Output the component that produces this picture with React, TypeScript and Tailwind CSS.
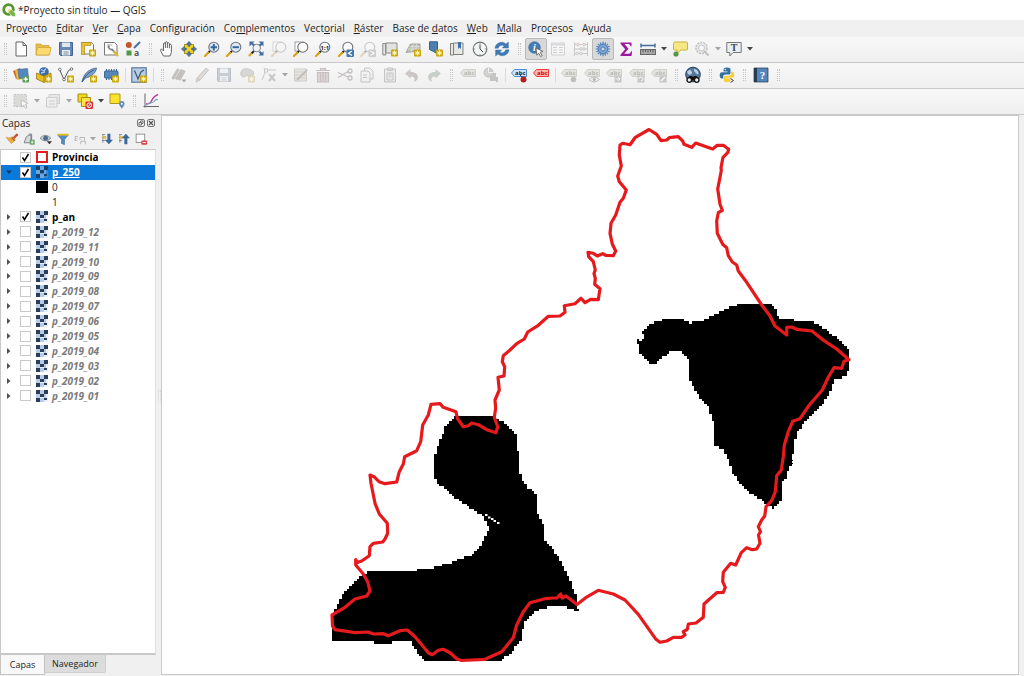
import { useState } from "react";
import type { ReactNode } from "react";

/* ---------- Icon building blocks (16 x 16 grid) ---------- */

function Icon({ children, faded = false }: { children: ReactNode; faded?: boolean }) {
  return (
    <svg
      viewBox="0 0 16 16"
      aria-hidden="true"
      className={faded ? "size-4 overflow-visible opacity-35 grayscale-[50%]" : "size-4 overflow-visible"}
    >
      {children}
    </svg>
  );
}

function NewBadge() {
  return (
    <g>
      <rect x="9" y="8.5" width="7" height="7" rx="1" fill="#c9a50a" />
      <path d="M12.5 9.5v5M10.3 10.8l4.4 2.5M14.7 10.8l-4.4 2.5" stroke="#fff6b8" strokeWidth="1.2" />
    </g>
  );
}

function Lens({ children, blank = false }: { children?: ReactNode; blank?: boolean }) {
  return (
    <g>
      <path d="M6 10 3.6 12.4" stroke="#222" strokeWidth="2" />
      <path d="M4.2 11.8 1 15" stroke="#d9a514" strokeWidth="2.2" strokeLinecap="round" />
      <circle cx="9.8" cy="6.2" r="5" fill={blank ? "#fafafa" : "#dfe9f5"} stroke="#6d737b" strokeWidth="1.1" />
      {children}
    </g>
  );
}

function Tag({ tone = "#8f9178", fill = "#c3c5aa", text = "#44472f" }: { tone?: string; fill?: string; text?: string }) {
  return (
    <g>
      <path d="M.5 6 3.500 2.500h12v7h-12z" fill={fill} stroke={tone} strokeLinejoin="round" />
      <text x="9.3" y="8" fontSize="6" fontWeight="700" textAnchor="middle" fill={text} fontFamily="Open Sans, sans-serif">
        abc
      </text>
    </g>
  );
}

const Cursor = () => <path d="M8 7l7 3.4-2.8.9 2 3.2-1.6 1-2-3.3-1.8 2z" fill="#fff" stroke="#555" strokeWidth=".8" />;

const icons: Record<string, ReactNode> = {
  newProject: <path d="M3 1h7l3.5 3.5V15H3zM10 1v3.5h3.5" fill="#fff" stroke="#666" />,
  open: (
    <g stroke="#d0a63a" strokeWidth=".8">
      <path d="M1 3h5l1 1.500h7V14H1z" fill="#e6bd4b" />
      <path d="M2.500 6.500H16L14.500 14H1z" fill="#fbdb70" />
    </g>
  ),
  save: (
    <g>
      <path d="M1.500 1.500h13v13h-12l-1-1z" fill="#6589b3" stroke="#41658f" />
      <path d="M4 1.500h8v4.500H4z" fill="#dfe6ee" />
      <path d="M4 9h8v5.500H4z" fill="#e9edf2" />
      <path d="M5.500 11h5M5.500 13h5" stroke="#7b8ea5" />
    </g>
  ),
  layout: (
    <g>
      <path d="M1.500 1.500h10l2 2V13h-9z" fill="#fff" stroke="#777" />
      <path d="M1.500 1.500H11v3H4.500v9h-3z" fill="#ebc234" stroke="#b08e1c" strokeWidth=".7" />
      <NewBadge />
    </g>
  ),
  layouts: (
    <g>
      <path d="M1.500 1.500h10l2.500 2.500v10H1.500z" fill="#fff" stroke="#777" />
      <path d="M4 4h5M4 6h2" fill="none" stroke="#aaa" />
      <path d="M6 4.500a2.800 2.800 0 0 0 3 4l5.500 5.500" stroke="#7d868f" strokeWidth="1.800" fill="none" />
      <path d="M10.500 10.500 15 15" stroke="#e0bd2d" strokeWidth="2.400" />
    </g>
  ),
  style: (
    <g>
      <circle cx="3.800" cy="4" r="3" fill="#c4542b" />
      <path d="M9 7 15 1" stroke="#4c74a8" strokeWidth="2.200" />
      <rect x="1.500" y="9.500" width="5" height="5" fill="#4f9a4a" />
      <text x="9" y="14.500" fontSize="8.500" fontWeight="700" fill="#555" fontFamily="Open Sans, sans-serif">
        a
      </text>
    </g>
  ),
  pan: (
    <path
      d="M4.500 15 2 10.500C1 8.500 2 7.500 3.300 8.500L4.500 10V3c0-1.400 1.900-1.400 1.900 0V1.700c0-1.400 2-1.400 2 0v1c0-1.300 2-1.300 2 0v1.500c0-1.200 2-1.200 2 0V10c0 2.500-1 3.500-1.400 5zM6.400 3v4M8.400 2.700V7M10.400 4v3.200"
      fill="#fff"
      stroke="#555"
      strokeWidth=".9"
    />
  ),
  panSel: (
    <g>
      <rect x="3.500" y="3.500" width="9" height="9" fill="#f2d321" stroke="#b39a1b" />
      <path
        d="M8 .3 10.600 3.300H9v2H7v-2H5.400zM8 15.700 5.400 12.700H7v-2h2v2h1.600zM.3 8l3-2.600V7h2v2h-2v1.600zM15.700 8l-3 2.600V9h-2V7h2V5.400z"
        fill="#53779f"
        stroke="#35577f"
        strokeWidth=".5"
      />
    </g>
  ),
  zoomIn: (
    <Lens>
      <path d="M9.800 3v6.400M6.600 6.200H13" stroke="#34679e" strokeWidth="2" />
    </Lens>
  ),
  zoomOut: (
    <Lens>
      <path d="M6.600 6.200H13" stroke="#34679e" strokeWidth="2" />
    </Lens>
  ),
  zoomFull: (
    <g>
      <path d="M3.500 12.500 6 10" stroke="#222" strokeWidth="2" />
      <path d="M3.500 12.300 1 15" stroke="#d9a514" strokeWidth="2.200" />
      <circle cx="8.700" cy="7" r="3.800" fill="#eef3f8" stroke="#7b838c" />
      <path
        d="M1.500.5h5L5 2l1.800 1.800-1.500 1.500L3.500 3.500 1.500 5.500zM15.500.5v5L14 4l-1.800 1.500-1.500-1.500L12.500 2.200 10.500.5zM15.500 14.500h-5l1.700-1.500-1.500-1.500 1.500-1.500L14 11.700l1.500-1.700z"
        fill="#426f9f"
      />
    </g>
  ),
  zoomLayer: (
    <g>
      <rect x="2" y="1" width="9" height="9" fill="#fff" stroke="#888" strokeWidth=".8" />
      <Lens blank />
    </g>
  ),
  zoomNative: (
    <Lens blank>
      <text x="9.800" y="8.500" fontSize="6" fontWeight="700" textAnchor="middle" fill="#222" fontFamily="Open Sans, sans-serif">
        1:1
      </text>
    </Lens>
  ),
  zoomLast: (
    <g>
      <Lens blank />
      <rect x="8.500" y="8.500" width="7.500" height="7.500" rx="1" fill="#4478ad" />
      <path d="m14 10-3.500 2.200L14 14.500" stroke="#fff" strokeWidth="1.300" fill="none" />
    </g>
  ),
  zoomNext: (
    <g>
      <Lens blank />
      <rect x="8.500" y="8.500" width="7.500" height="7.500" rx="1" fill="#888" />
      <path d="m10.500 10 3.500 2.200-3.500 2.300" stroke="#fff" strokeWidth="1.300" fill="none" />
    </g>
  ),
  newMap: (
    <g>
      <path d="M.8 2.500h3V14h-3zM3.800 2H15v10H3.800z" fill="#e2e3e0" stroke="#8b8d88" />
      <NewBadge />
    </g>
  ),
  new3d: (
    <g>
      <path d="M5.500 3H15v7L1 11.500z" fill="#bfc1bb" stroke="#94968f" strokeWidth=".8" />
      <path d="M4.500 5.500H15M3 8h12M8.500 3 6 11M11.800 3 10.500 10" stroke="#e9e9e6" strokeWidth=".6" />
      <NewBadge />
    </g>
  ),
  bookmarkNew: (
    <g>
      <path d="M2.500.8h8V13L6.500 10.500 2.500 8.500z" fill="#4e7eb0" stroke="#31618f" />
      <NewBadge />
    </g>
  ),
  bookmarks: (
    <g>
      <path d="M1.500 2.500h3V14h-3zM4.500 2H14v11.500H4.500z" fill="#e6e7e5" stroke="#7f817c" />
      <path d="M9 1h3v7l-1.500-1.500L9 8z" fill="#3f70a6" />
    </g>
  ),
  clock: (
    <g>
      <circle cx="8" cy="8" r="6.800" fill="#f4f6f6" stroke="#777c7f" strokeWidth="1.200" />
      <path d="M8 3.500V8l3 3" stroke="#444" fill="none" />
      <path d="M8 1.500v1.300M8 13.200v1.300M1.500 8h1.300M13.200 8h1.300" stroke="#777" />
    </g>
  ),
  refresh: (
    <g fill="#3f7db8" stroke="#2d6299" strokeWidth=".4">
      <path d="M1 7.200C1.300 2 8-.8 12 3l2.400-2V7H8.300l1.900-2C8 3.300 5.300 4.200 4.300 7.200z" />
      <path d="M15 8.800C14.700 14 8 16.800 4 13l-2.400 2V9h6.100l-1.900 2c2.200 1.700 4.900.8 5.900-2.200z" />
    </g>
  ),
  identify: (
    <g>
      <circle cx="6.500" cy="6.500" r="5.800" fill="#447cb3" stroke="#316294" strokeWidth=".6" />
      <text x="6.400" y="10" fontSize="10" fontStyle="italic" fontWeight="700" textAnchor="middle" fill="#fff" fontFamily="Liberation Serif, serif">
        i
      </text>
      <Cursor />
    </g>
  ),
  table: (
    <g>
      <path d="M1.500 2h13v12h-13z" fill="#fff" stroke="#999" />
      <path d="M1.500 3.500h13" stroke="#8aa4bf" strokeWidth="2" />
      <path d="M3 6.500h4M9 6.500h4M3 9h4M9 9h4M3 11.500h4M9 11.500h4" stroke="#888" />
    </g>
  ),
  abacus: (
    <g stroke="#777" fill="none">
      <path d="M1.500 1v14M14.500 1v14M1.500 3.500h13M1.500 8h13M1.500 12.500h13" />
      <g fill="#eee">
        <circle cx="5" cy="3.500" r="1.300" stroke="#b55" />
        <circle cx="11" cy="3.500" r="1.300" stroke="#b55" />
        <circle cx="8" cy="8" r="1.300" />
        <circle cx="11" cy="8" r="1.300" />
        <circle cx="4.500" cy="12.500" r="1.300" />
        <circle cx="8" cy="12.500" r="1.300" />
      </g>
    </g>
  ),
  gear: (
    <g stroke="#4d7fb8">
      <path
        d="M8 .8v14.400M.8 8h14.400M2.900 2.900l10.200 10.200M13.100 2.900 2.900 13.100M5.300 1.400l5.400 13.200M10.700 1.400 5.300 14.600M1.400 5.300l13.200 5.400M14.600 5.300 1.400 10.700"
        strokeWidth="1.200"
      />
      <circle cx="8" cy="8" r="4.800" fill="#7ba5d3" />
      <circle cx="8" cy="8" r="2" fill="#dadada" />
    </g>
  ),
  sigma: (
    <path
      d="M2.500 1.500h11v3.800h-1C12 3.600 11.300 3 10 3H6.500l4 4.700-4.300 5H10.500c1.400 0 2.200-.8 2.600-2.500h1L13.500 15h-11v-1.200l4.700-5.500-4.700-5.500z"
      fill="#9b1a9b"
    />
  ),
  measure: (
    <g>
      <path d="M.5 4.500h15M1 2.500v4M15 2.500v4" stroke="#436b98" strokeWidth="1.400" />
      <rect x=".5" y="8.500" width="15" height="5" fill="#aaa" stroke="#666" />
      <path d="M3 9v2.500M5.500 9v2M8 9v2.500M10.500 9v2M13 9v2.500" stroke="#444" strokeWidth=".7" />
    </g>
  ),
  tip: (
    <g>
      <path d="M3 1h11.500q1 0 1 1v6q0 1-1 1H9l-4 3.500V9H2.500q-1 0-1-1V2.500Q1.500 1 3 1z" fill="#f6e785" stroke="#c9b33c" />
      <circle cx="4" cy="13" r="2.600" fill="#569347" />
    </g>
  ),
  search: (
    <g stroke="#666" fill="none">
      <circle cx="7.500" cy="7" r="5.500" fill="#ddd" strokeDasharray="2 1" strokeWidth="1.600" />
      <circle cx="7.500" cy="7" r="3" fill="#fff" />
      <path d="m10 10 4.500 4.500" strokeWidth="2" />
    </g>
  ),
  text: (
    <g>
      <path d="M.8 1.500h14.400v10H7L3.800 15v-3.500h-3z" fill="#e8f0f5" stroke="#777" />
      <text x="8" y="10" fontSize="10" fontWeight="700" textAnchor="middle" fill="#444" fontFamily="Liberation Serif, serif">
        T
      </text>
    </g>
  ),
  dataSources: (
    <g>
      <path d="m0 4 7-3 3 9-7 2z" fill="#d56529" />
      <path d="m2 3 7-1 2 10-7 1z" fill="#e7bb3f" />
      <path d="M5 2.500 14.500 1.500 15.500 10.500l-9.500 1z" fill="#5387bf" stroke="#3c6ba0" strokeWidth=".6" />
      <rect x="9.500" y="9" width="6.500" height="6.500" rx="1" fill="#5c9a5a" />
      <path d="M12.700 10v4.500M10.500 12.200H15" stroke="#fff" strokeWidth="1.300" />
    </g>
  ),
  geopackage: (
    <g>
      <circle cx="8" cy="5" r="4.800" fill="#3a6ea5" />
      <path d="M5 2.500 8 4l2-2.500M5 6l4-1" stroke="#a9c7e3" strokeWidth="1.300" fill="none" />
      <path d="m.5 6 7.500 3 7-3v5l-7 4.500L.5 12z" fill="#e8bd22" stroke="#8c6f10" strokeWidth=".7" />
      <path d="M8 9v6.500" stroke="#8c6f10" strokeWidth=".7" />
      <NewBadge />
    </g>
  ),
  shapefile: (
    <g>
      <path d="M1.500 2.500 6 12.500l4.500-9L14 2" fill="none" stroke="#555" />
      <g fill="#fff" stroke="#555" strokeWidth=".8">
        <circle cx="1.800" cy="2.500" r="1.300" />
        <circle cx="6" cy="12.500" r="1.300" />
        <circle cx="13.500" cy="2" r="1.300" />
      </g>
      <NewBadge />
    </g>
  ),
  spatialite: (
    <g>
      <path d="M1 15C2 8 7 2 15.500 1 15 6 10 10 4.500 11z" fill="#7ba1cb" stroke="#3d6491" strokeWidth=".8" />
      <path d="M1 15C4 9 8 5 13 3" fill="none" stroke="#34577f" />
      <NewBadge />
    </g>
  ),
  memory: (
    <g>
      <path d="M3.500 2v11M6 2v11M8.500 2v11M11 2v11M13.500 2v11" stroke="#345f8f" />
      <rect x="1.500" y="4" width="13.500" height="7" rx="1" fill="#5586bb" stroke="#3a6797" />
      <NewBadge />
    </g>
  ),
  virtual: (
    <g>
      <rect x=".8" y=".8" width="14.400" height="14.400" fill="#b9cee4" stroke="#55789d" strokeWidth="1.200" />
      <path d="M3.500 3.500 7 12l3-7 3-2" fill="none" stroke="#35577b" strokeWidth="1.200" />
      <NewBadge />
    </g>
  ),
  edits: (
    <g stroke="#75614e" strokeWidth="2.800">
      <path d="m1.500 12 6-10M5 12.500l6-10M8 13l5.500-9.500" />
      <path d="M10.500 12.500h5l-2.500 3z" fill="#222" stroke="none" />
    </g>
  ),
  pencil: <path d="m2 15 1-4L12 1l2.500 2L6 13zM3 11l3 2" fill="#c6a98c" stroke="#806d5a" />,
  addFeature: (
    <g>
      <path d="M2 8C1 3 5 1 9 2s6 2 5.500 5S8 8 7 9s-4 2-5-1z" fill="#9fa59a" stroke="#6d7468" />
      <NewBadge />
    </g>
  ),
  vertex: (
    <g stroke="#777" fill="none">
      <path d="M1 13 5 3h10M5 3l-2.500-2" />
      <rect x="3.500" y="2" width="3" height="3" fill="#fff" />
      <path d="m8 7 6 7M14 7l-6 7" strokeWidth="2" />
    </g>
  ),
  modify: (
    <g>
      <path d="M1.500 2h12v12h-12zM1.500 5h12M1.500 8h12M1.500 11h12" fill="#d3ceb4" stroke="#8a8874" />
      <path d="m4 13 10-10" stroke="#6e5a44" strokeWidth="2" />
    </g>
  ),
  trash: (
    <path
      d="M1 3.500h14M5.500 3V1.500h5V3M2.500 5.500h11V15h-11zM5.500 6v8M8 6v8M10.500 6v8"
      fill="#c4a1a1"
      stroke="#8a5d5d"
      strokeWidth="1.200"
    />
  ),
  cut: (
    <g fill="none" stroke="#70605c" strokeWidth="1.300">
      <path d="M1 5.500 11 10M1 10.500 12 4" />
      <circle cx="13" cy="4" r="2" />
      <circle cx="13" cy="11" r="2" />
    </g>
  ),
  copy: <path d="M2 4h7l2 2v9H2zM5.500 4V1H11l3 3v8h-3M4 8h4M4 10.500h4" fill="#eee" stroke="#6f6f6f" />,
  paste: <path d="M2.500 2h11v13h-11zM5.500 1h5v2.500h-5zM5 6h6v7H5zM6.500 8h3M6.500 10h3" fill="#ddd" stroke="#6d6d6d" />,
  undo: <path d="M1 6.500 6.500 2v3C12 5 14 7.500 14 10.500c0 2-2 3.500-4.500 4.500 2-2.500 1.500-5.500-3-5.500v2z" fill="#8f6d6d" />,
  redo: <path d="M15 6.500 9.500 2v3C4 5 2 7.500 2 10.500c0 2 2 3.500 4.500 4.500-2-2.500-1.500-5.500 3-5.500v2z" fill="#6d8f6d" />,
  tag: <Tag />,
  diagram: (
    <g>
      <circle cx="5.500" cy="5.500" r="4.500" fill="#7fa07f" stroke="#555" />
      <path d="M5.500 1v4.500H10" stroke="#eee" fill="#a66" />
      <path d="M7 8h3v6H7zM10 6h3v8h-3zM13 10h2v5h-2z" fill="#7b6c6c" />
    </g>
  ),
  labelBlue: (
    <g>
      <Tag tone="#4d8fd6" fill="#cfe4fa" text="#222" />
      <path d="m8 7 5 5" stroke="#444" />
      <circle cx="12.500" cy="12.500" r="3" fill="#b32020" />
    </g>
  ),
  labelRed: <Tag tone="#f03a3a" fill="#ffb3b3" text="#d80000" />,
  tagPin: (
    <g>
      <Tag />
      <circle cx="12.500" cy="12.500" r="2.800" fill="#7a5555" />
    </g>
  ),
  tagEye: (
    <g>
      <Tag />
      <path d="M5 12.500q5-5 10.500 0-5.500 5-10.500 0z" fill="#eee" stroke="#555" />
      <circle cx="10.300" cy="12.500" r="1.500" fill="#444" />
    </g>
  ),
  tagMove: (
    <g>
      <Tag />
      <rect x="8.500" y="8.500" width="7" height="7" fill="#777" />
      <path d="M9.500 12H14M12 10l2 2-2 2" stroke="#fff" fill="none" />
    </g>
  ),
  tagRotate: (
    <g>
      <Tag />
      <rect x="8.500" y="8.500" width="7" height="7" fill="#777" />
      <path d="M10 12a2 2 0 1 1 2 2" stroke="#fff" fill="none" />
    </g>
  ),
  tagEdit: (
    <g>
      <Tag />
      <rect x="8.500" y="8.500" width="7" height="7" fill="#777" />
      <path d="m10 14 4-4" stroke="#fff" strokeWidth="1.500" />
    </g>
  ),
  metasearch: (
    <g>
      <circle cx="8" cy="7.500" r="7.300" fill="#55779b" stroke="#263c54" />
      <path d="M2 5c3-4 5-1 5 1s-3 2-4 1M9 2c3 0 5 3 4.500 5S10 5 9 4" fill="#b9d0e5" />
      <path d="M4.500 9h2.300l1.200 1 1.200-1h2.300l3 4.500H1.500z" fill="#111" />
      <circle cx="4.300" cy="13" r="2.300" fill="#eee" stroke="#111" strokeWidth="1.300" />
      <circle cx="11.700" cy="13" r="2.300" fill="#eee" stroke="#111" strokeWidth="1.300" />
    </g>
  ),
  python: (
    <g>
      <path
        d="M8 .5c-3 0-3.500 1-3.500 2.300V4.500H8.500v.7H3C1.200 5.200.7 6.800.7 8.500s.8 3 2 3h1.500V9.700c0-1.300 1-2.200 2.300-2.200h3.300c1 0 1.700-.8 1.700-1.800V2.800C11.500 1.300 10.500.5 8 .5z"
        fill="#34709f"
      />
      <path
        d="M8 15.300c3 0 3.500-1 3.500-2.300v-1.500h-4v-.7H13c1.800 0 2.200-1.300 2.200-3s-.7-3-2-3H12v1.700c0 1.300-1 2.300-2.300 2.300H6.400c-1 0-1.700.8-1.700 1.800V13c0 1.500 1 2.300 3.300 2.300z"
        fill="#fbcf3c"
      />
      <circle cx="6.300" cy="2.500" r=".7" fill="#fff" />
      <path d="m11.500 11.500 3 2-3 2" stroke="#444" fill="none" />
    </g>
  ),
  help: (
    <g>
      <path d="M1 1h14v14H1z" fill="#5285ba" stroke="#23364a" strokeWidth=".7" />
      <path d="M1 1h3v14H1z" fill="#263a50" />
      <text x="9.500" y="12" fontSize="11" fontWeight="700" textAnchor="middle" fill="#fff" fontFamily="Liberation Serif, serif">
        ?
      </text>
    </g>
  ),
  select: (
    <g>
      <rect x="1" y="1.500" width="12.500" height="12" fill="#a9ae98" stroke="#666" strokeDasharray="2 1.300" />
      <Cursor />
    </g>
  ),
  selectForm: (
    <g>
      <path d="M4 1.500h10.500v9H4z" fill="#ccc" stroke="#888" />
      <path d="M1.500 4.500H12V14H1.500z" fill="#e5e5e0" stroke="#888" />
      <path d="M4 8h6M4 11h6" stroke="#888" />
    </g>
  ),
  deselect: (
    <g>
      <path d="M1 1h9v8H1z" fill="#f4d91e" stroke="#a48e16" />
      <path d="M4.500 4.500h9v9h-9z" fill="#fbe546" stroke="#a48e16" />
      <rect x="8.500" y="8.500" width="7.500" height="7.500" rx="1" fill="#d22f2f" />
      <circle cx="12.200" cy="12.200" r="2.300" stroke="#fff" fill="none" />
      <path d="m10.700 13.800 3-3" stroke="#fff" />
    </g>
  ),
  selectLocation: (
    <g>
      <path d="M1 1h10v9.500H1z" fill="#fbe22b" stroke="#ac981d" />
      <path d="M12.800 15.800c-1.500-2.500-2.700-3.300-2.700-5a2.700 2.700 0 0 1 5.400 0c0 1.700-1.200 2.500-2.700 5z" fill="#628cb5" />
      <circle cx="12.800" cy="10.800" r="1" fill="#fff" />
    </g>
  ),
  profile: (
    <g fill="none">
      <path d="M2 .5v14M.5 13.500H16" stroke="#666" />
      <path d="M3 11c5 0 5-2 6.500-5S13 2.500 15 1.500" stroke="#c32f93" strokeWidth="1.400" />
      <path d="M3 12c4-4 6-1 8-3.500s3-2 4-2" stroke="#76a6bd" strokeWidth="1.200" />
    </g>
  ),
  brush: (
    <g>
      <path d="m9.500 7.500 6-6" stroke="#c94f38" strokeWidth="3" />
      <path d="M0 5.500 7 14l5.500-4.500-4-4.500C6 7 3 7 0 5.500z" fill="#ecaf3c" stroke="#c98a2e" strokeWidth=".8" />
      <path d="M7.500 6 11.500 10.500" stroke="#b05a33" strokeWidth="1.600" />
    </g>
  ),
  addGroup: (
    <g fill="none" stroke="#667">
      <path d="M4.500 5 1.500 13h9V3h-3zM7.500 1.500h4v10" fill="#d7dade" />
      <rect x="9" y="9" width="6.500" height="6.500" fill="#5ca05a" stroke="none" />
      <path d="M12.200 10v4.500M10 12.200h4.500" stroke="#fff" />
    </g>
  ),
  eye: (
    <g>
      <path d="M0 7q7-8 14.500 0-7.500 7-14.500 0z" fill="#c9d3dd" stroke="#6a7681" />
      <circle cx="7.500" cy="7" r="3.300" fill="#4e6c8b" />
      <path d="M9 11h7l-3.500 4z" fill="#333" />
    </g>
  ),
  filter: (
    <g>
      <path d="M1 3h14l-5 5.500V15.500l-4-1.500V8.500z" fill="#568bc0" stroke="#42719f" strokeWidth=".8" />
      <path d="M.5 1h15v2.500H.5z" fill="#e2bb28" />
    </g>
  ),
  epsilon: (
    <g>
      <text x="0" y="10" fontSize="14" fill="#333" fontFamily="Liberation Serif, serif">
        ε
      </text>
      <path d="M8 9V6h6v4M9 15v-4h6v4" fill="none" stroke="#555" strokeWidth="1.200" />
    </g>
  ),
  expand: (
    <g>
      <path d="M1.500 2h4M1.500 6h4M1.500 10h4M2.500 2v11" stroke="#777" />
      <path d="M2 4h5v3.500H2z" fill="#e1bc4c" />
      <path d="M8.500 1h4v8H16l-5.500 6L5 9h3.500z" fill="#39689d" />
    </g>
  ),
  collapse: (
    <g>
      <path d="M1.500 2h4M1.500 6h4M1.500 10h4M2.500 2v11" stroke="#777" />
      <path d="M2 4h5v3.500H2z" fill="#e1bc4c" />
      <path d="M8.500 15h4V7H16l-5.500-6L5 7h3.500z" fill="#39689d" />
    </g>
  ),
  remove: (
    <g>
      <rect x="1.500" y="1.500" width="11.500" height="11" fill="#fff" stroke="#777" />
      <rect x="8.500" y="10" width="7.500" height="5.500" rx="1" fill="#dd3f3f" />
      <path d="M10 12.700h4.500" stroke="#fff" strokeWidth="1.400" />
    </g>
  ),
};

/* ---------- Toolbar parts ---------- */

type Tool = { icon: string; label: string; off?: boolean; on?: boolean };

const t = (icon: string, label: string): Tool => ({ icon, label });
const off = (icon: string, label: string): Tool => ({ icon, label, off: true });
const on = (icon: string, label: string): Tool => ({ icon, label, on: true });

function ToolButton({ tool }: { tool: Tool }) {
  return (
    <button
      type="button"
      aria-label={tool.label}
      aria-pressed={tool.on}
      disabled={tool.off}
      className={
        tool.on
          ? "flex size-[22px] shrink-0 items-center justify-center rounded-xs border border-[#b9b9b9] bg-[#d8d8d8]"
          : "flex size-[22px] shrink-0 items-center justify-center"
      }
    >
      <Icon faded={tool.off}>{icons[tool.icon]}</Icon>
    </button>
  );
}

function Tools({ items, width }: { items: Tool[]; width: string }) {
  return (
    <div className={`flex shrink-0 justify-between ${width}`}>
      {items.map((tool) => (
        <ToolButton key={tool.label} tool={tool} />
      ))}
    </div>
  );
}

function Handle({ first = false }: { first?: boolean }) {
  return (
    <div className={first ? "flex w-2.5 shrink-0 justify-center" : "flex w-3 shrink-0 justify-center"}>
      <div className="h-3 w-[3px] border-x border-dotted border-[#c6c6c6]" />
    </div>
  );
}

function Rule() {
  return (
    <div className="flex w-1.5 shrink-0 justify-center">
      <div className="h-3.5 w-px bg-[#d9d9d9]" />
    </div>
  );
}

function Drop({ label, faded = false }: { label: string; faded?: boolean }) {
  return (
    <button type="button" aria-label={label} className="flex h-4 w-2.5 shrink-0 items-center justify-center">
      <svg viewBox="0 0 6 4" aria-hidden="true" className={faded ? "h-1 w-1.5 text-[#a5a5a5]" : "h-1 w-1.5 text-[#444]"}>
        <path d="M0 0h6L3 3.500z" fill="currentColor" />
      </svg>
    </button>
  );
}

function Toolbar({ children, label }: { children: ReactNode; label: string }) {
  return (
    <div
      role="toolbar"
      aria-label={label}
      className="flex h-[26px] shrink-0 items-center overflow-hidden border-b border-[#c9c9c9] bg-linear-to-b from-[#f8f8f8] to-[#efefef] pb-px"
    >
      {children}
    </div>
  );
}

/* ---------- Menu bar: [text before, mnemonic, text after] ---------- */

const menus: [string, string, string][] = [
  ["Pro", "y", "ecto"],
  ["", "E", "ditar"],
  ["", "V", "er"],
  ["", "C", "apa"],
  ["Confi", "g", "uración"],
  ["Co", "m", "plementos"],
  ["Vect", "o", "rial"],
  ["", "R", "áster"],
  ["Base de ", "d", "atos"],
  ["", "W", "eb"],
  ["", "M", "alla"],
  ["Pro", "c", "esos"],
  ["A", "y", "uda"],
];

/* ---------- Layer tree ---------- */

type LayerRow = {
  name: string;
  kind: "vector" | "raster" | "legend-black" | "legend-empty";
  checked?: boolean;
  selected?: boolean;
  dim?: boolean;
};

const layers: LayerRow[] = [
  { name: "Provincia", kind: "vector", checked: true },
  { name: "p_250", kind: "raster", checked: true, selected: true },
  { name: "0", kind: "legend-black" },
  { name: "1", kind: "legend-empty" },
  { name: "p_an", kind: "raster", checked: true },
  ...["12", "11", "10", "09", "08", "07", "06", "05", "04", "03", "02", "01"].map(
    (month): LayerRow => ({ name: `p_2019_${month}`, kind: "raster", dim: true }),
  ),
];

function RasterIcon({ selected = false }: { selected?: boolean }) {
  const dark = selected ? "#16426f" : "#2c3d56";
  const light = selected ? "#6ba6dd" : "#b5cdeb";
  return (
    <svg viewBox="0 0 12 12" aria-hidden="true" className="size-3" shapeRendering="crispEdges">
      <path d="M0 0h12v12H0z" fill={selected ? "#3b86cd" : "#e9f0f9"} />
      <path d="M0 4h4v4H0zM4 0h4v4H4zM8 4h2v4H8zM4 8h4v4H4z" fill={light} />
      <path d="M0 0h4v4H0zM8 0h4v4H8zM4 4h4v3H4zM0 8h4v4H0zM8 8h3v2H8z" fill={dark} />
    </svg>
  );
}

function LayerItem({ row }: { row: LayerRow }) {
  const [checked, setChecked] = useState(Boolean(row.checked));
  const isLegend = row.kind.startsWith("legend");
  const id = `layer-${row.name}`;
  const textStyle = row.selected
    ? "font-bold text-white underline"
    : row.dim
      ? "font-['Noto_Sans',sans-serif] font-bold italic text-[#7a7a7a]"
      : isLegend
        ? "text-[#222]"
        : "font-bold text-black";
  return (
    <li
      className={
        row.selected
          ? "grid grid-cols-[19px_16px_16px_1fr] items-center bg-[#0b79d8]"
          : "grid grid-cols-[19px_16px_16px_1fr] items-center"
      }
    >
      {row.kind === "raster" ? (
        <button type="button" aria-label={`Desplegar ${row.name}`} className="flex h-3 w-4 items-center justify-center">
          <svg viewBox="0 0 6 6" aria-hidden="true" className="size-1.5">
            {row.selected ? <path d="M0 1.500h6L3 5z" fill="#0b3b6b" /> : <path d="M1 0v6l3.500-3z" fill="#505050" />}
          </svg>
        </button>
      ) : (
        <span />
      )}
      {isLegend ? (
        <span />
      ) : (
        <span className="grid size-[11px]">
          <input
            id={id}
            type="checkbox"
            checked={checked}
            onChange={() => setChecked(!checked)}
            className="col-start-1 row-start-1 size-[11px] appearance-none border border-[#c9c9c9] bg-white"
          />
          {checked && (
            <svg viewBox="0 0 11 11" aria-hidden="true" className="pointer-events-none col-start-1 row-start-1 size-[11px]">
              <path d="m2.500 5.500 2 3L8.500 2" fill="none" stroke="#000" strokeWidth="1.500" />
            </svg>
          )}
        </span>
      )}
      {row.kind === "vector" && <span className="size-3 border-2 border-[#e02020] bg-white" />}
      {row.kind === "raster" && <RasterIcon selected={row.selected} />}
      {row.kind === "legend-black" && <span className="size-3 bg-black" />}
      {row.kind === "legend-empty" && <span />}
      <label htmlFor={isLegend ? undefined : id} className={`text-[10px] leading-[14px] whitespace-nowrap ${textStyle}`}>
        {row.name}
      </label>
    </li>
  );
}

/* ---------- Map ---------- */

type Point = [number, number];

const parse = (source: string): Point[] =>
  source
    .trim()
    .split(/\s+/)
    .map((pair) => pair.split(",").map(Number) as Point);

const CELL = 2.5;
const ORIGIN_X = 331.5;
const ORIGIN_Y = 303.5;

const snap = (value: number, origin: number) => origin + Math.round((value - origin) / CELL) * CELL;

/** Fills a polygon with square raster cells, one horizontal run at a time. */
function rasterPath(points: Point[]): string {
  const ys = points.map((p) => p[1]);
  let path = "";
  for (let y = snap(Math.min(...ys), ORIGIN_Y); y < Math.max(...ys); y += CELL) {
    const middle = y + CELL / 2;
    const hits: number[] = [];
    points.forEach(([x1, y1], i) => {
      const [x2, y2] = points[(i + 1) % points.length];
      if (y1 > middle !== y2 > middle) hits.push(x1 + ((middle - y1) * (x2 - x1)) / (y2 - y1));
    });
    hits.sort((a, b) => a - b);
    for (let i = 0; i + 1 < hits.length; i += 2) {
      const from = snap(hits[i], ORIGIN_X);
      const to = snap(hits[i + 1], ORIGIN_X);
      path += `M${from} ${y}H${to}V${y + CELL}H${from}z`;
    }
  }
  return path;
}

const eastZone = parse(`
  636,338 638.500,338 640,341 643,339 642.700,331.700 650,324.300 660,320 670,318.300 681.700,318.700 690,322.300 700,322 711.700,315.700
  723.300,310 735,305.300 744,303.300 770,303.700 775.300,308.300 776,316 781.700,319 789,319.300 791,317 794,320 813.300,321.700
  821.700,326.700 833.300,335.700 841.700,341 849,350 849,370 845,375.700 833.300,380 831.700,390 823.300,401.700 810,415 798.300,430.700
  793.300,441.700 792.300,464 788.300,466.700 786.700,476.700 782.700,480 782.300,499.300 776.700,503.300 774,508.300 768.300,505
  760,499.300 748.300,491.700 740,483.300 731.700,471.700 728.300,458.300 722.700,448.300 714,445.700 713.300,423.300 708.300,406.700
  700,398.300 690,381.700 688.700,358.300 681.700,352.300 670,351.700 663.300,356.700 655,364 650.700,364 640,353.300`);

const westZone = parse(`
  453.300,416.700 465,415.300 491.700,415.700 501.700,421 515,431.700 516,441.700 518.300,453.300 520.700,478.300 528.300,488.300 533.300,490
  537.300,495 537.700,513.300 542.700,523.300 544,538.300 557.300,555 568.300,576.700 577.300,600 578,611.700 571.700,609.300 560,605.300
  546.700,607.300 533.300,611.700 524,623.300 520,641.700 510,653.300 500,660.300 424,660.300 416.700,651.700 410,641.700 395,641
  385,644 375,643.300 371.700,640.700 356.700,641.700 331.700,640.700 331.700,615 336.700,605 345,590 356.700,580 365,572.700
  375,570.300 398.300,571.300 426.700,569 446.700,563.700 470,555 480,546.700 487.300,533.300 488.300,526.700 486,523 483.300,516
  466.700,505 451.700,495 436.700,481.700 433.700,475 435,453.300 441.700,435 446.700,423.300`);

const province = `
  649,129.500 656.700,134.300 661,140.700 666.700,140 669.300,137.700 678.300,136.700 682.700,141 684,144.300 691.700,147.300 695.700,143
  703.300,145.700 712.700,149 717.300,145.300 723.300,145.300 728.700,149.300 727.700,152.700 723,157.300 721,167.700 721.300,170.700
  717.700,189 720,204.300 722.300,210.300 718.300,212.700 716.700,221 717.300,233.300 722.700,244.300 726.700,247.700 728.300,255.700
  732.300,262 736.700,265 738.300,271 746.700,282.300 761.700,305 770,316 775,326 786.700,335 786.700,327.300 791.700,327 796.700,329.300
  812,331 824,340.700 836.700,349 849,359.700 844,361.300 841.700,368.300 834,367.700 828.300,377.300 822.300,390 809.300,405
  800,418.700 792.700,421.300 788.300,431.700 784.300,445 783.300,456.700 781.300,470 776.700,475.700 775.300,491.700 771.700,500.700
  766,506.700 764.700,516 761.700,520 758.300,526.700 760.500,531.700 758.500,535 760,543.300 756.700,549 752.300,549.700 746.700,547.700
  741.300,552.700 735.700,565 730.700,563.300 723.300,572.300 722.700,581.700 725.300,587.300 723.300,592.300 716.700,592.700 704,604
  703.300,617.300 696,623 688.300,624 687.300,629.300 683.300,631.700 685,635 681.700,637.300 673.300,637.300 666.700,641 660,642.300
  656,639.300 638.300,614.300 625,600 613.300,594 598.300,590.300 585.700,597.700 577,604.500 566,596 562,598 560.700,594
  557,598 553.300,598 545,598.700 530,602.700 523.300,611.700 516.700,625 513.300,637.700 501.700,651.700 485,659.300 461.700,660.500
  457,659 450,652.700 443.300,649.300 438.300,650.300 432.300,654.700 428.300,652.700 415,636.700 407.300,630 400,630.700 388.300,635.700
  383.300,633.700 373.300,634 368.300,632 355,632.700 335,629.700 332.500,626 332,615 345,607.300 355,599 366.700,596 370,591
  367.700,581.700 363.300,574 355.700,565 355.700,559.500 357.500,562.500 361.700,561 369.300,555.700 370,546.700 373.300,543.300 382.700,542
  385,539 387.700,533.300 387.300,523.300 379.300,514 375,503.300 371,483.300 370,475 374,476.700 379,481.700 385,483.700 396.700,482
  399.300,471.700 403.300,464 404.700,456.700 416.700,450.700 420.700,441.700 422.700,425 428.300,415 431,404.300 440,403.700
  443.300,407.300 456,411.700 457.300,418.300 463.300,426.700 468.300,425.700 471.700,423 478.300,424.700 486.700,429.700 496,432.700
  497.700,426.700 494.300,417.300 495.700,408.300 495,400 499.300,390 498,377.300 504,376 504.700,366.700 502.300,361.700 503.300,355.700
  510,350 516.700,343.700 524.300,339 527.700,332 538.300,325.300 548.300,316.300 560,316 565,312.300 564.300,305.700 575,303.700
  581,298.300 585,302.700 590.700,299.300 598.300,299.700 600,288.700 594.700,284.300 595.300,278.300 594,273.500 595.300,270
  593.300,261.700 588.700,256.700 588,252.300 593.300,253.300 597.300,256 602.700,253.700 606,255.500 613.300,255.700 615.700,251
  612.300,244 610,233.300 611,223.300 615.700,215 620,202.300 623.300,198.300 626.300,190 619.300,181.700 617.700,176 621.300,166
  619.300,155 620,145 622.700,143.300 630,144.700 635,137.700`;

function MapCanvas() {
  return (
    <svg viewBox="162 116 856 558" role="img" aria-label="Mapa de la provincia" className="h-full w-full">
      <path d={rasterPath(eastZone) + rasterPath(westZone)} shapeRendering="crispEdges" />
      <path d="M485 514h2.500v2h-2.500zM488 516.500h2.500v2h-2.500zM491 518h2.500v2h-2.500zM493.500 520h2.500v2h-2.500zM497 522h2.500v2h-2.500z" fill="#fff" />
      <path d="M790 460h3v1h-3zM790 463h3v1h-3z" />
      <polygon points={province} fill="none" stroke="#e6191c" strokeWidth="3.200" strokeLinejoin="round" />
    </svg>
  );
}

/* ---------- Window ---------- */

export default function App() {
  return (
    <div className="flex h-screen flex-col overflow-hidden bg-[#f0f0f0] font-['Open_Sans','Noto_Sans',sans-serif] text-[#1e1e1e]">
      <header className="flex h-5 shrink-0 items-center gap-0.5 bg-white px-0.5">
        <svg viewBox="0 0 14 14" aria-hidden="true" className="size-3.5">
          <circle cx="6.500" cy="6.500" r="4.800" fill="none" stroke="#589632" strokeWidth="2.800" />
          <path d="M6.500 6.500h3l4 4v3h-3l-4-4z" fill="#7fb44e" stroke="#fff" strokeWidth=".5" />
          <path d="M6.500 6.500h3L6.500 9.500z" fill="#f0e64a" />
        </svg>
        <h1 className="text-[10px] leading-4">*Proyecto sin título — QGIS</h1>
      </header>

      <nav aria-label="Menú" className="flex h-[17px] shrink-0 items-start gap-[9px] pl-1.5">
        {menus.map(([before, key, after]) => (
          <button key={before + key + after} type="button" className="text-[10px] leading-4 whitespace-pre">
            {before}
            <span className="underline">{key}</span>
            {after}
          </button>
        ))}
      </nav>

      <Toolbar label="Proyecto y navegación">
        <Handle first />
        <Tools
          width="w-[134px]"
          items={[
            t("newProject", "Nuevo"),
            t("open", "Abrir"),
            t("save", "Guardar"),
            t("layout", "Nueva composición"),
            t("layouts", "Composiciones"),
            t("style", "Estilos"),
          ]}
        />
        <Handle />
        <Tools
          width="w-[357px]"
          items={[
            t("pan", "Desplazar"),
            t("panSel", "Desplazar a selección"),
            t("zoomIn", "Acercar"),
            t("zoomOut", "Alejar"),
            t("zoomFull", "Zoom general"),
            off("zoomLayer", "Zoom a selección"),
            t("zoomLayer", "Zoom a capa"),
            t("zoomNative", "Zoom nativo"),
            t("zoomLast", "Zoom anterior"),
            off("zoomNext", "Zoom siguiente"),
            t("newMap", "Nueva vista"),
            t("new3d", "Nueva vista 3D"),
            t("bookmarkNew", "Nuevo marcador"),
            t("bookmarks", "Marcadores"),
            t("clock", "Controlador temporal"),
            t("refresh", "Actualizar"),
          ]}
        />
        <Handle />
        <Tools
          width="w-[134px]"
          items={[
            on("identify", "Identificar"),
            off("table", "Tabla de atributos"),
            off("abacus", "Calculadora"),
            on("gear", "Caja de herramientas"),
            t("sigma", "Estadísticas"),
            t("measure", "Medir"),
          ]}
        />
        <Drop label="Opciones de medir" />
        <ToolButton tool={t("tip", "Avisos del mapa")} />
        <ToolButton tool={off("search", "Acciones")} />
        <Drop label="Opciones de acciones" faded />
        <ToolButton tool={t("text", "Anotación")} />
        <Drop label="Opciones de anotación" />
      </Toolbar>

      <Toolbar label="Capas y edición">
        <Handle first />
        <Tools
          width="w-[112px]"
          items={[
            t("dataSources", "Fuentes de datos"),
            t("geopackage", "Nuevo GeoPackage"),
            t("shapefile", "Nuevo shapefile"),
            t("spatialite", "Nueva SpatiaLite"),
            t("memory", "Nueva capa temporal"),
          ]}
        />
        <Rule />
        <ToolButton tool={t("virtual", "Nueva capa virtual")} />
        <Rule />
        <Handle />
        <Tools
          width="w-[112px]"
          items={[
            off("edits", "Ediciones actuales"),
            off("pencil", "Conmutar edición"),
            off("save", "Guardar cambios"),
            off("addFeature", "Añadir objeto"),
            off("vertex", "Herramienta de vértices"),
          ]}
        />
        <Drop label="Opciones de vértices" faded />
        <Tools
          width="w-[155px]"
          items={[
            off("modify", "Modificar atributos"),
            off("trash", "Borrar"),
            off("cut", "Cortar"),
            off("copy", "Copiar"),
            off("paste", "Pegar"),
            off("undo", "Deshacer"),
            off("redo", "Rehacer"),
          ]}
        />
        <Handle />
        <Tools width="w-[45px]" items={[off("tag", "Etiquetado"), off("diagram", "Diagramas")]} />
        <Rule />
        <Tools width="w-11" items={[t("labelBlue", "Etiquetas fijadas"), t("labelRed", "Etiquetas sin colocar")]} />
        <Rule />
        <Tools
          width="w-[112px]"
          items={[
            off("tagPin", "Fijar etiqueta"),
            off("tagEye", "Mostrar etiqueta"),
            off("tagMove", "Mover etiqueta"),
            off("tagRotate", "Rotar etiqueta"),
            off("tagEdit", "Cambiar etiqueta"),
          ]}
        />
        <Handle />
        <ToolButton tool={t("metasearch", "MetaSearch")} />
        <Handle />
        <ToolButton tool={t("python", "Consola de Python")} />
        <Handle />
        <ToolButton tool={t("help", "Contenidos de ayuda")} />
        <Handle />
      </Toolbar>

      <Toolbar label="Selección">
        <Handle first />
        <ToolButton tool={off("select", "Seleccionar objetos")} />
        <Drop label="Opciones de selección" faded />
        <ToolButton tool={off("selectForm", "Seleccionar por valor")} />
        <Drop label="Opciones de valor" faded />
        <ToolButton tool={t("deselect", "Deseleccionar")} />
        <Drop label="Opciones de deseleccionar" />
        <ToolButton tool={t("selectLocation", "Seleccionar por localización")} />
        <Handle />
        <ToolButton tool={t("profile", "Perfil del terreno")} />
      </Toolbar>

      <main className="flex min-h-0 flex-1">
        <aside className="flex w-[156px] shrink-0 flex-col">
          <div className="flex h-4 shrink-0 items-center justify-between pr-px pl-0.5">
            <h2 className="text-[10px] leading-4">Capas</h2>
            <div className="flex items-center gap-0.5">
              <button type="button" aria-label="Desacoplar panel">
                <svg viewBox="0 0 8 8" aria-hidden="true" className="block size-2" fill="none" stroke="#555" strokeWidth=".8">
                  <rect x=".5" y=".5" width="7" height="7" rx="1.500" />
                  <path d="M2 3.500h2.500V6H2zM3.500 3.500V2H6v2.500H4.500" />
                </svg>
              </button>
              <button type="button" aria-label="Cerrar panel">
                <svg viewBox="0 0 8 8" aria-hidden="true" className="block size-2" fill="none" stroke="#555" strokeWidth=".8">
                  <rect x=".5" y=".5" width="7" height="7" rx="1.500" />
                  <path d="m2 2 4 4M6 2 2 6" strokeWidth="1.200" />
                </svg>
              </button>
            </div>
          </div>

          <div role="toolbar" aria-label="Herramientas de capas" className="flex h-[18px] shrink-0 items-start pl-[3px]">
            {["brush", "addGroup", "eye", "filter", "epsilon", "drop", "expand", "collapse", "remove"].map((name) =>
              name === "drop" ? (
                <Drop key={name} label="Opciones de filtro" faded />
              ) : (
                <button key={name} type="button" aria-label={name} className="flex h-4 w-[17px] items-center justify-center">
                  <svg viewBox="0 0 16 16" aria-hidden="true" className={name === "epsilon" ? "size-3 opacity-40" : "size-3"}>
                    {icons[name]}
                  </svg>
                </button>
              ),
            )}
          </div>

          <div className="min-h-0 flex-1 overflow-hidden border border-b-2 border-[#c8c8c8] border-r-[#e0e0e0] bg-white">
            <ul className="grid h-[253px] grid-rows-[repeat(17,minmax(0,1fr))]">
              {layers.map((row) => (
                <LayerItem key={row.name} row={row} />
              ))}
            </ul>
          </div>

          <div role="tablist" className="flex h-[21px] shrink-0 items-start">
            <button
              type="button"
              role="tab"
              aria-selected="true"
              className="h-5 w-[45px] border-r border-b border-l border-[#c4c4c4] bg-[#f8f8f8] text-[9px] leading-[18px]"
            >
              Capas
            </button>
            <button
              type="button"
              role="tab"
              aria-selected="false"
              className="h-[18px] w-[61px] rounded-br-xs border-r border-b border-[#cfcfcf] bg-[#dcdcdc] text-[9px] leading-[17px]"
            >
              Navegador
            </button>
          </div>
        </aside>

        <div className="flex w-[5px] shrink-0 items-center justify-end">
          <div className="h-3 w-[3px] border-x border-dotted border-[#dcdcdc]" />
        </div>

        <section className="mr-[5px] mb-px min-w-0 flex-1 border border-[#c8c8c8] bg-white">
          <MapCanvas />
        </section>
      </main>
    </div>
  );
}
